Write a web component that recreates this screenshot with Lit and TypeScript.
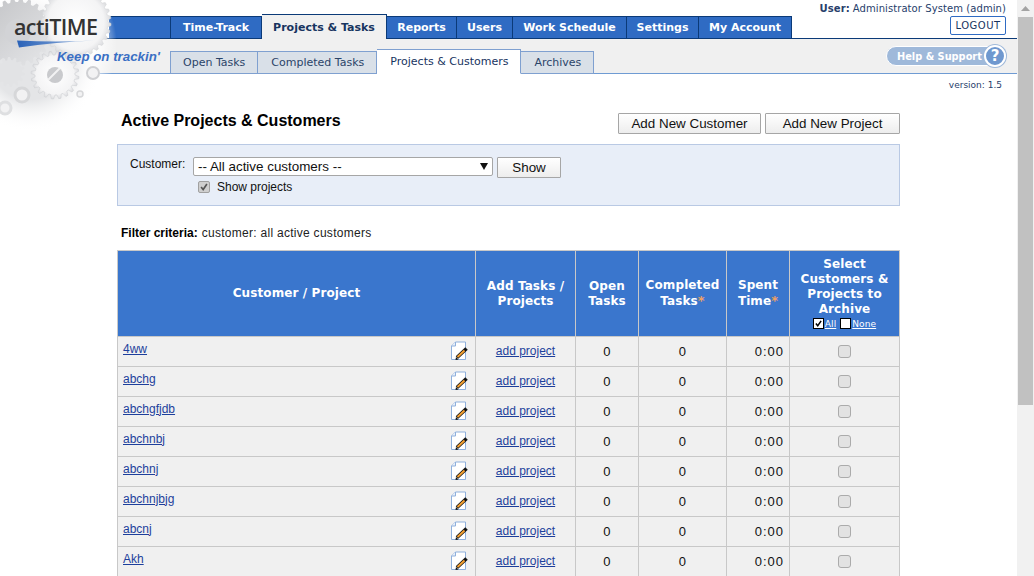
import { LitElement, html, css, svg } from "lit";
import { customElement } from "lit/decorators.js";

const NAV = [
  { label: "Time-Track", width: 91 },
  { label: "Projects & Tasks", width: 125 },
  { label: "Reports", width: 70 },
  { label: "Users", width: 56 },
  { label: "Work Schedule", width: 114 },
  { label: "Settings", width: 72 },
  { label: "My Account", width: 93 },
];
const SUB = ["Open Tasks", "Completed Tasks", "Projects & Customers", "Archives"];
const CUSTOMERS = ["4ww", "abchg", "abchgfjdb", "abchnbj", "abchnj", "abchnjbjg", "abcnj", "Akh"];

// toothed wheel outline, used for the gears behind the logo
function gearPath(cx: number, cy: number, outer: number, inner: number, teeth: number) {
  const pts: string[] = [];
  const step = (Math.PI * 2) / teeth;
  for (let i = 0; i < teeth; i++) {
    const a = i * step;
    const corners: [number, number][] = [
      [a, inner],
      [a + step * 0.2, outer],
      [a + step * 0.5, outer],
      [a + step * 0.7, inner],
    ];
    for (const [t, r] of corners) {
      pts.push(`${(cx + Math.cos(t) * r).toFixed(1)},${(cy + Math.sin(t) * r).toFixed(1)}`);
    }
  }
  return `M${pts.join("L")}Z`;
}

const checkMark = (color: string) => html`
  <svg viewBox="0 0 12 12" width="100%" height="100%" style="display:block">
    <path d="M2.5 6 L5 9 L9.5 2.5" fill="none" stroke=${color} stroke-width="2"></path>
  </svg>
`;

const docIcon = html`
  <svg class="edit-icon" viewBox="0 0 18 20" width="18" height="20">
    <path d="M1.5 5 L5.5 1 H15.5 V18.5 H1.5 Z" fill="#fff" stroke="#8fb0dc"></path>
    <path d="M1.5 5 H5.5 V1" fill="#e8eff9" stroke="#8fb0dc"></path>
    <path d="M7 16.5 L16.5 7.5" stroke="#111" stroke-width="3.6"></path>
    <path d="M7.5 16 L14.5 9.4" stroke="#f5a030" stroke-width="2"></path>
    <path d="M5.5 19 L6 16 L8.5 18.5 Z" fill="#111"></path>
  </svg>
`;

@customElement("app-root")
export class AppRoot extends LitElement {
  static override styles = css`
    :host {
      display: flex;
      width: 1034px;
      height: 576px;
      overflow: hidden;
      position: relative;
      background: #fff;
      font-family: "Liberation Sans", Arial, sans-serif;
      color: #111;
    }

    .page {
      flex: 1;
      min-width: 0;
      display: flex;
      flex-direction: column;
    }
    .page > * {
      flex-shrink: 0;
    }

    /* scrollbar */
    .scrollbar {
      width: 17px;
      background: #f1f1f1;
      display: flex;
      flex-direction: column;
      flex-shrink: 0;
    }
    .scroll-up {
      height: 17px;
      display: flex;
      align-items: center;
      justify-content: center;
    }
    .scroll-thumb {
      height: 388px;
      margin: 0 1px 0 1px;
      background: #c1c1c1;
    }

    /* header */
    .user-line {
      height: 16px;
      display: flex;
      justify-content: flex-end;
      align-items: center;
      padding-right: 11px;
      font: 10px "DejaVu Sans", Verdana, sans-serif;
      letter-spacing: 0.08px;
      color: #27406b;
      white-space: nowrap;
    }
    .user-line b {
      margin-right: 3px;
    }

    .nav {
      height: 23px;
      box-sizing: border-box;
      display: flex;
      border-bottom: 1px solid #0b3a78;
    }
    .nav-filler {
      margin-left: 109px;
      width: 62px;
      height: 23px;
      box-sizing: border-box;
      background: #2f6bc3;
      border-top: 1px solid #0b3a78;
      border-right: 1px solid #0b3a78;
      border-bottom: 1px solid #0b3a78;
    }
    .nav-tab {
      height: 23px;
      box-sizing: border-box;
      display: flex;
      align-items: center;
      justify-content: center;
      background: #2f6bc3;
      border-top: 1px solid #0b3a78;
      border-right: 1px solid #0b3a78;
      border-bottom: 1px solid #0b3a78;
      color: #fff;
      font: bold 11px "DejaVu Sans", Verdana, sans-serif;
      white-space: nowrap;
    }
    .nav-tab.active {
      height: 25px;
      margin-top: -2px;
      background: #f0f0f0;
      color: #17345f;
      border-bottom: none;
      border-top: 1px solid #0b3a78;
      position: relative;
    }
    .logout {
      margin-left: auto;
      margin-right: 11px;
      width: 56px;
      height: 19px;
      box-sizing: border-box;
      display: flex;
      align-items: center;
      justify-content: center;
      background: #fff;
      border: 1px solid #2f6bc3;
      border-radius: 2px;
      color: #17345f;
      font: 10px "DejaVu Sans", Verdana, sans-serif;
      letter-spacing: 0.5px;
    }

    .subnav {
      height: 35px;
      box-sizing: border-box;
      background: #f0f0f0;
      border-bottom: 1px solid #6f9bd3;
      display: flex;
      align-items: flex-end;
      padding-left: 170px;
      position: relative;
    }
    .sub-tab {
      height: 23px;
      margin-bottom: -1px;
      box-sizing: border-box;
      padding: 0 12px 0 13px;
      display: flex;
      align-items: center;
      background: #d9e0e8;
      border: 1px solid #7fa0d0;
      border-left: none;
      color: #2b4468;
      font: 11px "DejaVu Sans", Verdana, sans-serif;
      white-space: nowrap;
    }
    .sub-tab:first-child {
      border-left: 1px solid #7fa0d0;
      padding-left: 12px;
    }
    .sub-tab.active {
      height: 25px;
      background: #fff;
      border-bottom-color: #fff;
      color: #17345f;
    }
    .help {
      position: absolute;
      left: 886px;
      top: 7px;
      width: 119px;
      height: 20px;
      box-sizing: border-box;
      background: #9fb9da;
      border: 1px solid #fff;
      border-radius: 10px;
      display: flex;
      align-items: center;
      padding-left: 10px;
      color: #fff;
      font: bold 9.8px "DejaVu Sans", Verdana, sans-serif;
      white-space: nowrap;
    }
    .help-q {
      position: absolute;
      right: -2px;
      top: -2px;
      width: 22px;
      height: 22px;
      box-sizing: border-box;
      border-radius: 50%;
      background: #6f98cf;
      border: 2px solid #fff;
      box-shadow: 0 0 0 1px #9fb9da;
      display: flex;
      align-items: center;
      justify-content: center;
      font: bold 15px "DejaVu Sans", Verdana, sans-serif;
    }

    .version {
      height: 22px;
      display: flex;
      align-items: center;
      justify-content: flex-end;
      padding-right: 15px;
      font: 9px "DejaVu Sans", Verdana, sans-serif;
      color: #27406b;
    }

    /* logo sits over the corner of both bars */
    .logo {
      position: absolute;
      left: 0;
      top: 0;
      width: 170px;
      height: 130px;
      pointer-events: none;
    }
    .logo-word {
      position: absolute;
      left: 14px;
      top: 9px;
      font: 600 21.5px/36px "Open Sans", sans-serif;
      letter-spacing: -0.6px;
      color: #333;
    }
    .tagline {
      position: absolute;
      left: 57px;
      top: 48px;
      font: italic bold 13.3px/17px "Liberation Sans", Arial, sans-serif;
      color: #3a6fc4;
      white-space: nowrap;
    }

    /* content */
    .content {
      margin: 0 117px;
      display: flex;
      flex-direction: column;
    }
    .title-row {
      height: 21px;
      margin: 17px 0 10px;
      display: flex;
      align-items: flex-start;
      justify-content: space-between;
      padding-left: 4px;
    }
    h1 {
      margin: -1px 0 0;
      font: bold 16px/18px "Liberation Sans", Arial, sans-serif;
      color: #000;
    }
    .title-buttons {
      display: flex;
      gap: 4px;
    }
    .btn {
      height: 21px;
      box-sizing: border-box;
      display: flex;
      align-items: center;
      justify-content: center;
      background: linear-gradient(#fff, #ededed);
      border: 1px solid #a6a6a6;
      border-radius: 1px;
      font: 13.4px "Liberation Sans", Arial, sans-serif;
      color: #111;
    }
    .btn.customer {
      width: 143px;
    }
    .btn.project {
      width: 135px;
    }
    .btn.show {
      width: 64px;
      height: 21px;
    }

    .filter {
      height: 62px;
      box-sizing: border-box;
      background: #e8eef8;
      border: 1px solid #b9c9e4;
      padding: 12px 0 0 12px;
      display: grid;
      grid-template-columns: 63px auto;
      align-content: start;
      justify-content: start;
    }
    .filter-label {
      font-size: 12px;
      line-height: 14px;
      color: #111;
    }
    .filter-controls {
      display: flex;
      gap: 4px;
    }
    .select {
      width: 300px;
      height: 19px;
      box-sizing: border-box;
      background: #fff;
      border: 1px solid #a6a6a6;
      border-radius: 2px;
      display: flex;
      align-items: center;
      justify-content: space-between;
      padding: 0 4px;
      font-size: 13.4px;
      color: #111;
    }
    .show-projects {
      grid-column: 2;
      display: flex;
      align-items: center;
      gap: 7px;
      padding-left: 5px;
      margin-top: 2px;
      font-size: 12px;
      color: #111;
    }
    .show-projects .box {
      width: 12px;
      height: 12px;
      box-sizing: border-box;
      background: #cfcfcf;
      border: 1px solid #a0a0a0;
      border-radius: 2px;
    }

    .criteria {
      height: 44px;
      box-sizing: border-box;
      padding: 10px 0 0 4px;
      display: flex;
      align-items: center;
      gap: 4px;
      font-size: 12px;
      color: #222;
    }
    .criteria span {
      letter-spacing: 0.28px;
    }
    .criteria b {
      color: #000;
    }

    table {
      border-collapse: collapse;
      table-layout: fixed;
      width: 782px;
    }
    th,
    td {
      border: 1px solid #c8c8c8;
      padding: 0;
    }
    th {
      height: 85px;
      background: #3a76cd;
      color: #fff;
      font: bold 12px/15px "DejaVu Sans", Verdana, sans-serif;
      letter-spacing: 0.1px;
      text-align: center;
    }
    th .star {
      color: #f0a060;
      font-size: 13px;
    }
    .pick {
      display: flex;
      justify-content: center;
      align-items: center;
      gap: 1px;
      font: 9px/11px "DejaVu Sans", Verdana, sans-serif;
      margin-top: 2px;
    }
    .pick span {
      text-decoration: underline;
    }
    .mini {
      display: inline-block;
      width: 11px;
      height: 11px;
      box-sizing: border-box;
      background: #fff;
      border: 1px solid #000;
      margin-top: -2px;
    }
    .mini.second {
      margin-left: 3px;
    }
    td {
      height: 29px;
      background: #f0f0f0;
      font-size: 13px;
      letter-spacing: 0.5px;
      text-align: center;
      color: #111;
    }
    td.link {
      height: 27px;
      padding-bottom: 2px;
    }
    td.name {
      height: 27px;
      text-align: left;
      padding: 0 7px 2px 5px;
      letter-spacing: 0;
    }
    .name-inner {
      display: flex;
      justify-content: space-between;
      align-items: center;
    }
    .name-inner a {
      position: relative;
      top: -2px;
    }
    a {
      color: #1d3f9c;
      font-size: 12px;
      text-decoration: underline;
      letter-spacing: 0;
    }
    td.time {
      text-align: right;
      padding-right: 5px;
      letter-spacing: 1px;
    }
    .edit-icon {
      display: block;
    }
    .row-check {
      display: block;
      margin: 0 auto;
      width: 13px;
      height: 13px;
      box-sizing: border-box;
      background: #e2e2e2;
      border: 1px solid #ababab;
      border-radius: 3px;
    }
  `;

  override render() {
    return html`
      <div class="page">
        <div class="user-line"><b>User:</b> Administrator System (admin)</div>
        <div class="nav">
          <div class="nav-filler"></div>
          ${NAV.map(
            (n) => html`<div
              class="nav-tab ${n.label === "Projects & Tasks" ? "active" : ""}"
              style="width:${n.width}px"
            >
              ${n.label}
            </div>`
          )}
          <div class="logout">LOGOUT</div>
        </div>
        <div class="subnav">
          ${SUB.map(
            (n) => html`<div class="sub-tab ${n === "Projects & Customers" ? "active" : ""}">${n}</div>`
          )}
          <div class="help">Help &amp; Support<span class="help-q">?</span></div>
        </div>
        <div class="version">version: 1.5</div>

        <div class="content">
          <div class="title-row">
            <h1>Active Projects &amp; Customers</h1>
            <div class="title-buttons">
              <div class="btn customer">Add New Customer</div>
              <div class="btn project">Add New Project</div>
            </div>
          </div>

          <div class="filter">
            <div class="filter-label">Customer:</div>
            <div class="filter-controls">
              <div class="select">
                <span>-- All active customers --</span>
                <svg width="8" height="7" viewBox="0 0 8 7"><path d="M0 0H8L4 7Z" fill="#111"></path></svg>
              </div>
              <div class="btn show">Show</div>
            </div>
            <div class="show-projects">
              <span class="box">${checkMark("#555")}</span>
              Show projects
            </div>
          </div>

          <div class="criteria"><b>Filter criteria:</b> <span>customer: all active customers</span></div>

          <table>
            <colgroup>
              <col style="width:358px" />
              <col style="width:100px" />
              <col style="width:63px" />
              <col style="width:88px" />
              <col style="width:63px" />
              <col style="width:110px" />
            </colgroup>
            <thead>
              <tr>
                <th>Customer / Project</th>
                <th>Add Tasks /<br />Projects</th>
                <th>Open<br />Tasks</th>
                <th>Completed<br />Tasks<span class="star">*</span></th>
                <th>Spent<br />Time<span class="star">*</span></th>
                <th>
                  Select<br />Customers &amp;<br />Projects to<br />Archive
                  <div class="pick">
                    <i class="mini">${checkMark("#000")}</i><span>All</span>
                    <i class="mini second"></i><span>None</span>
                  </div>
                </th>
              </tr>
            </thead>
            <tbody>
              ${CUSTOMERS.map(
                (c) => html`
                  <tr>
                    <td class="name">
                      <div class="name-inner"><a href="#">${c}</a>${docIcon}</div>
                    </td>
                    <td class="link"><a href="#">add project</a></td>
                    <td>0</td>
                    <td>0</td>
                    <td class="time">0:00</td>
                    <td><span class="row-check"></span></td>
                  </tr>
                `
              )}
            </tbody>
          </table>
        </div>
      </div>

      <div class="scrollbar">
        <div class="scroll-up">
          <svg width="9" height="5" viewBox="0 0 9 5"><path d="M0 5 L4.5 0 L9 5Z" fill="#a3a3a3"></path></svg>
        </div>
        <div class="scroll-thumb"></div>
      </div>

      <div class="logo">
        <svg width="170" height="130" viewBox="0 0 170 130">
          <defs>
            <radialGradient id="fade" gradientUnits="userSpaceOnUse" cx="35" cy="45" r="82">
              <stop offset="0.72" stop-color="#fff"></stop>
              <stop offset="1" stop-color="#fff" stop-opacity="0"></stop>
            </radialGradient>
            <radialGradient id="haze" gradientUnits="userSpaceOnUse" cx="30" cy="60" r="72">
              <stop offset="0.55" stop-color="#e4e5e7"></stop>
              <stop offset="1" stop-color="#fff" stop-opacity="0"></stop>
            </radialGradient>
            <linearGradient id="dark" x1="0" y1="0" x2="1" y2="1">
              <stop offset="0" stop-color="#c2c3c6"></stop>
              <stop offset="1" stop-color="#e6e7e9"></stop>
            </linearGradient>
            <radialGradient id="light">
              <stop offset="0" stop-color="#fff"></stop>
              <stop offset="0.8" stop-color="#f4f4f5"></stop>
              <stop offset="1" stop-color="#dcdde0"></stop>
            </radialGradient>
            <linearGradient id="swoosh" x1="0" y1="0" x2="1" y2="0">
              <stop offset="0" stop-color="#2a62b8"></stop>
              <stop offset="1" stop-color="#9db9e0"></stop>
            </linearGradient>
          </defs>
          <rect x="0" y="0" width="122" height="130" fill="url(#fade)"></rect>
          <rect x="0" y="0" width="104" height="130" fill="url(#haze)"></rect>
          ${svg`
            <path d=${gearPath(18, 32, 34, 30, 24)} fill="url(#dark)"></path>
            <circle cx="18" cy="32" r="13" fill="#d2d3d6"></circle>
            <path d=${gearPath(76, 22, 35, 32, 30)} fill="url(#light)" stroke="#d5d6d9" stroke-width=".6"></path>
            <path d=${gearPath(55, 75, 24, 20, 20)} fill="url(#light)" stroke="#cfd0d3" stroke-width=".6"></path>
            <circle cx="55" cy="75" r="8" fill="#c9cacd"></circle>
            <path d="M48 80 L60 68" stroke="#f2f2f3" stroke-width="2"></path>
            <path d=${gearPath(10, 72, 15, 12, 14)} fill="#e2e3e5"></path>
            <circle cx="93" cy="73" r="6" fill="#f2f2f3" stroke="#cfd0d3" stroke-width="2"></circle>
            <circle cx="80" cy="94" r="3" fill="#f2f2f3" stroke="#d6d7d9" stroke-width="1.5"></circle>
            <circle cx="22" cy="95" r="7" fill="#f2f2f3" stroke="#d6d7d9" stroke-width="3"></circle>
            <circle cx="5" cy="108" r="6" fill="#f2f2f3" stroke="#dedfe1" stroke-width="3"></circle>
            <path d="M17 40.5 Q56 42.5 95 40.5 Q56 42 19 47.5 Z" fill="url(#swoosh)"></path>
          `}
        </svg>
        <div class="logo-word">actiTIME</div>
        <div class="tagline">Keep on trackin'</div>
      </div>
    `;
  }
}

declare global {
  interface HTMLElementTagNameMap {
    "app-root": AppRoot;
  }
}
